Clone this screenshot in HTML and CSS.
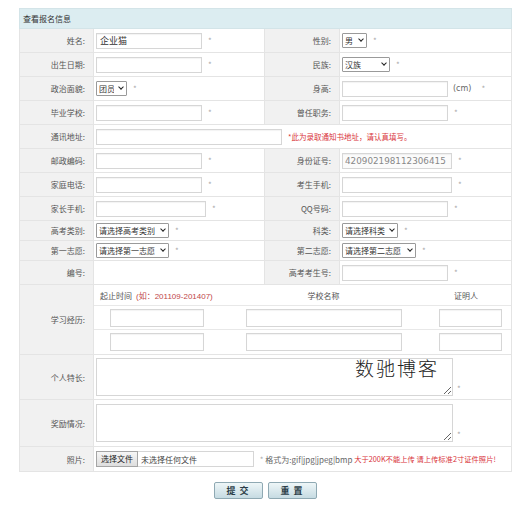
FILE: index.html
```html
<!DOCTYPE html>
<html lang="zh-CN">
<head>
    <meta charset="UTF-8">
    <meta name="viewport" content="width=device-width, initial-scale=1.0">
    <title>查看报名信息</title>
    <link rel="stylesheet" href="styles.css">
</head>
<body>
    <div class="page">
        <table class="form-table">
            <colgroup>
                <col class="c-label"><col class="c-value"><col class="c-label2"><col class="c-value2">
            </colgroup>
            <tr class="head">
                <td colspan="4">查看报名信息</td>
            </tr>
            <tr class="row">
                <td class="label">姓名:</td>
                <td class="value"><input class="txt filled" type="text" value="企业猫"><span class="star">*</span></td>
                <td class="label">性别:</td>
                <td class="value"><span class="pick"><select class="sel w-sex"><option>男</option></select></span><span class="star">*</span></td>
            </tr>
            <tr class="row">
                <td class="label">出生日期:</td>
                <td class="value"><input class="txt" type="text"><span class="star">*</span></td>
                <td class="label">民族:</td>
                <td class="value"><span class="pick"><select class="sel w-nation"><option>汉族</option></select></span><span class="star">*</span></td>
            </tr>
            <tr class="row">
                <td class="label">政治面貌:</td>
                <td class="value"><span class="pick"><select class="sel w-party"><option>团员</option></select></span><span class="star">*</span></td>
                <td class="label">身高:</td>
                <td class="value"><input class="txt" type="text"><span class="unit">(cm)</span><span class="star">*</span></td>
            </tr>
            <tr class="row">
                <td class="label">毕业学校:</td>
                <td class="value"><input class="txt" type="text"><span class="star">*</span></td>
                <td class="label">曾任职务:</td>
                <td class="value"><input class="txt" type="text"><span class="star">*</span></td>
            </tr>
            <tr class="row">
                <td class="label">通讯地址:</td>
                <td class="value" colspan="3"><input class="txt addr" type="text"><span class="note">*此为录取通知书地址，请认真填写。</span></td>
            </tr>
            <tr class="row">
                <td class="label">邮政编码:</td>
                <td class="value"><input class="txt" type="text"><span class="star">*</span></td>
                <td class="label">身份证号:</td>
                <td class="value"><input class="txt wide idno" type="text" value="420902198112306415" readonly><span class="star">*</span></td>
            </tr>
            <tr class="row">
                <td class="label">家庭电话:</td>
                <td class="value"><input class="txt" type="text"><span class="star">*</span></td>
                <td class="label">考生手机:</td>
                <td class="value"><input class="txt wide" type="text"><span class="star">*</span></td>
            </tr>
            <tr class="row">
                <td class="label">家长手机:</td>
                <td class="value"><input class="txt wide" type="text"><span class="star">*</span></td>
                <td class="label">QQ号码:</td>
                <td class="value"><input class="txt" type="text"><span class="star">*</span></td>
            </tr>
            <tr class="row short">
                <td class="label">高考类别:</td>
                <td class="value"><span class="pick"><select class="sel w-long"><option>请选择高考类别</option></select></span><span class="star">*</span></td>
                <td class="label">科类:</td>
                <td class="value"><span class="pick"><select class="sel w-kind"><option>请选择科类</option></select></span><span class="star">*</span></td>
            </tr>
            <tr class="row short">
                <td class="label">第一志愿:</td>
                <td class="value"><span class="pick"><select class="sel w-long"><option>请选择第一志愿</option></select></span><span class="star">*</span></td>
                <td class="label">第二志愿:</td>
                <td class="value"><span class="pick"><select class="sel w-second"><option>请选择第二志愿</option></select></span><span class="star">*</span></td>
            </tr>
            <tr class="row">
                <td class="label">编号:</td>
                <td class="value blank"></td>
                <td class="label">高考考生号:</td>
                <td class="value"><input class="txt" type="text"><span class="star">*</span></td>
            </tr>
            <tr class="study">
                <td class="label">学习经历:</td>
                <td class="value inner" colspan="3">
                    <div class="study-grid">
                        <div class="sg-head first">起止时间 <span class="hint">(如：201109-201407)</span></div>
                        <div class="sg-head">学校名称</div>
                        <div class="sg-head">证明人</div>
                        <div class="sg-cell"><input class="txt s-time" type="text"></div>
                        <div class="sg-cell"><input class="txt s-school" type="text"></div>
                        <div class="sg-cell"><input class="txt s-who" type="text"></div>
                        <div class="sg-cell"><input class="txt s-time" type="text"></div>
                        <div class="sg-cell"><input class="txt s-school" type="text"></div>
                        <div class="sg-cell"><input class="txt s-who" type="text"></div>
                    </div>
                </td>
            </tr>
            <tr class="area-row">
                <td class="label">个人特长:</td>
                <td class="value" colspan="3"><div class="area-wrap"><textarea class="area"></textarea><span class="star">*</span><span class="mark">数驰博客</span></div></td>
            </tr>
            <tr class="area-row tall">
                <td class="label">奖励情况:</td>
                <td class="value" colspan="3"><div class="area-wrap"><textarea class="area"></textarea><span class="star">*</span></div></td>
            </tr>
            <tr class="row photo">
                <td class="label">照片:</td>
                <td class="value" colspan="3">
                    <span class="file"><span class="file-btn">选择文件</span><span class="file-name">未选择任何文件</span></span>
                    <span class="star">*</span>
                    <span class="fmt">格式为:gif|jpg|jpeg|bmp</span>
                    <span class="warn">大于200K不能上传 请上传标准2寸证件照片!</span>
                </td>
            </tr>
        </table>

        <div class="actions">
            <button class="btn" type="button">提 交</button>
            <button class="btn" type="button">重 置</button>
        </div>
    </div>
</body>
</html>
```

FILE: styles.css
```css
body {
    margin: 0;
    background: #fff;
    font-family: "Noto Sans CJK SC", "DejaVu Sans", sans-serif;
    font-size: 8px;
    color: #555;
}
.page {
    padding: 8px 0 0 19px;
    width: 492px;
}
.form-table {
    width: 492px;
    table-layout: fixed;
    border-collapse: collapse;
    border: 1px solid #dcdcdc;
}
.c-label { width: 74px; }
.c-value { width: 171px; }
.c-label2 { width: 75px; }
.c-value2 { width: 172px; }
.form-table td {
    border: 1px solid #e4e4e4;
    padding: 0;
    white-space: nowrap;
    overflow: hidden;
}
.head td {
    height: 19px;
    background: #dcedf1;
    color: #333;
    padding-left: 3px;
    border-color: #d3e4e8;
}
.row td { height: 23px; }
.short td { height: 19px; }
.label {
    background: #f1f1f1;
    text-align: right;
    padding-right: 8px !important;
    color: #555;
}
.value {
    padding-left: 2px !important;
    vertical-align: middle;
}
.txt {
    box-sizing: border-box;
    width: 106px;
    height: 16px;
    border: 1px solid #d6d6d6;
    box-shadow: inset 0 1px 1px rgba(0,0,0,0.05);
    font-family: "Noto Sans CJK SC", sans-serif;
    font-size: 9px;
    color: #333;
    padding: 0 3px;
    vertical-align: middle;
    margin: 0;
}
.txt.wide { width: 110px; }
.txt.addr { width: 186px; }
.txt.idno {
    font-family: "DejaVu Sans", sans-serif;
    font-size: 8.8px;
    color: #888;
    background: #fbfbfb;
    padding: 0 2px;
}
.star {
    color: #aaa;
    margin-left: 6px;
    vertical-align: middle;
}
.unit {
    color: #666;
    margin-left: 5px;
    font-family: "DejaVu Sans", sans-serif;
    vertical-align: middle;
}
.unit + .star { margin-left: 10px; }
.note {
    color: #d9343a;
    font-size: 7.5px;
    margin-left: 6px;
    vertical-align: middle;
}

/* select boxes with a small bold chevron */
.pick {
    position: relative;
    display: inline-block;
    vertical-align: middle;
}
.pick::after {
    content: "";
    position: absolute;
    right: 4px;
    top: 4px;
    width: 3px;
    height: 3px;
    border-right: 1.5px solid #222;
    border-bottom: 1.5px solid #222;
    transform: rotate(45deg);
    pointer-events: none;
}
.sel {
    appearance: none;
    -webkit-appearance: none;
    display: block;
    box-sizing: border-box;
    height: 15px;
    font-family: "Noto Sans CJK SC", sans-serif;
    font-size: 8px;
    color: #333;
    border: 1px solid #9a9a9a;
    border-radius: 1px;
    padding: 0 12px 0 2px;
    margin: 0;
    background: #fff;
}
.w-sex { width: 25px; }
.w-party { width: 31px; }
.w-nation { width: 48px; }
.w-long { width: 73px; }
.w-kind { width: 56px; }
.w-second { width: 74px; }

/* study history block */
.study td { height: 69px; }
.value.inner { padding-left: 0 !important; vertical-align: top; }
.study-grid {
    display: grid;
    grid-template-columns: 132px 195px 1fr;
    grid-template-rows: 21px 24px 24px;
}
.sg-head {
    display: flex;
    align-items: center;
    justify-content: center;
    color: #555;
    border-bottom: 1px solid #e8e8e8;
}
.sg-head.first { justify-content: flex-start; padding-left: 6px; }
.hint {
    color: #c0464a;
    margin-left: 4px;
    font-family: "Liberation Sans", "Noto Sans CJK SC", sans-serif;
    font-size: 8px;
}
.sg-cell {
    display: flex;
    align-items: center;
    justify-content: center;
    border-bottom: 1px solid #e8e8e8;
}
.sg-cell:nth-last-child(-n+3) { border-bottom: none; }
.sg-cell:nth-child(3n+1) { justify-content: flex-start; padding-left: 16px; }
.s-time { width: 94px; height: 18px; }
.s-school { width: 156px; height: 18px; }
.s-who { width: 63px; height: 18px; margin-left: 8px; }

/* textareas */
.area-row td { height: 44px; }
.area-row.tall td { height: 46px; }
.area-wrap {
    position: relative;
    display: flex;
    align-items: flex-end;
}
.area {
    box-sizing: border-box;
    width: 357px;
    height: 38px;
    border: 1px solid #d6d6d6;
    margin: 0;
    padding: 2px;
    font-size: 9px;
}
.area-wrap .star { margin-left: 4px; margin-bottom: 2px; }
.mark {
    position: absolute;
    left: 259px;
    top: -4px;
    font-family: "Noto Sans CJK SC", sans-serif;
    font-weight: 300;
    font-size: 19px;
    letter-spacing: 2px;
    color: #222;
}

/* photo upload */
.photo td { height: 24px; }
.file {
    display: inline-flex;
    box-sizing: border-box;
    width: 158px;
    height: 16px;
    border: 1px solid #d6d6d6;
    vertical-align: middle;
    align-items: center;
}
.file-btn {
    height: 14px;
    line-height: 14px;
    padding: 0 4px;
    background: linear-gradient(#f6f6f6, #dedede);
    color: #222;
    outline: 1px solid #a5a5a5;
}
.file-name { color: #444; margin-left: 4px; }
.photo .star { margin-left: 4px; }
.fmt { color: #666; vertical-align: middle; }
.warn { color: #d9343a; font-size: 7.3px; vertical-align: middle; }

.actions {
    display: flex;
    justify-content: center;
    gap: 5px;
    margin-top: 10px;
}
.btn {
    width: 49px;
    height: 17px;
    padding: 0;
    border: 1px solid #8fa9b3;
    border-radius: 2px;
    background: linear-gradient(#eef6f8, #c6dbe2);
    font-family: "Noto Sans CJK SC", sans-serif;
    font-size: 9px;
    font-weight: bold;
    color: #2b3d47;
    letter-spacing: 1px;
    cursor: pointer;
}
```
